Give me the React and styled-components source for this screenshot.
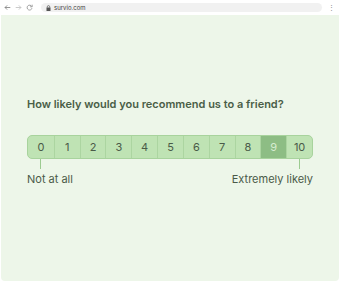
import styled, { createGlobalStyle } from "styled-components";

const Global = createGlobalStyle`
  html, body { margin: 0; padding: 0; background: #ffffff; }
  body { font-family: Inter, "Noto Sans", sans-serif; }
`;

const Window = styled.div`
  width: 340px;
  height: 282px;
  display: flex;
  flex-direction: column;
  background: #ffffff;
`;

const Toolbar = styled.div`
  height: 15px;
  display: flex;
  align-items: center;
  padding: 0 4px 0 4px;
  gap: 4px;
  color: #9a9a9a;
`;

const NavIcon = styled.svg`
  width: 7px;
  height: 7px;
  flex: none;
`;

const Address = styled.div`
  flex: 1;
  height: 9px;
  border-radius: 5px;
  background: #f1f1f1;
  display: flex;
  align-items: center;
  padding-left: 5px;
  gap: 3px;
  font-size: 6px;
  color: #3c3c3c;
  margin-left: 4px;
`;

const Menu = styled.div`
  width: 10px;
  text-align: center;
  font-size: 7px;
  line-height: 7px;
  color: #8a8a8a;
`;

const Page = styled.div`
  flex: 1;
  background: #edf6e9;
  border-radius: 0 0 4px 4px;
  margin: 0 1px 1px 1px;
  padding: 82px 26px 0 26px;
`;

const Question = styled.h2`
  margin: 0;
  font-size: 11px;
  font-weight: 600;
  color: #4a5e47;
  letter-spacing: 0;
`;

const Scale = styled.div`
  margin-top: 24px;
  display: grid;
  grid-template-columns: repeat(11, 1fr);
  height: 22px;
  border: 1px solid #a8d39d;
  border-radius: 5px;
  overflow: hidden;
  background: #bfe3b4;
`;

const Cell = styled.div`
  display: flex;
  align-items: center;
  justify-content: center;
  font-size: 11px;
  color: ${(p) => (p.$active ? "#d6ecd0" : "#4a5a48")};
  background: ${(p) => (p.$active ? "#8dbd84" : "transparent")};
  border-left: ${(p) => (p.$first ? "none" : "1px solid #acd5a1")};
`;

const Ticks = styled.div`
  display: flex;
  justify-content: space-between;
  padding: 0 13px;
  height: 10px;
`;

const Tick = styled.div`
  width: 1px;
  height: 10px;
  background: #9ccb91;
`;

const Labels = styled.div`
  display: flex;
  justify-content: space-between;
  font-size: 11px;
  color: #4a5a48;
  margin-top: 3px;
`;

export default function App() {
  const values = Array.from({ length: 11 }, (_, i) => i);
  return (
    <>
      <Global />
      <Window>
        <Toolbar>
          <NavIcon viewBox="0 0 10 10">
            <path d="M9 5H1.5M4.5 2L1.5 5l3 3" stroke="#777" strokeWidth="1.1" fill="none" />
          </NavIcon>
          <NavIcon viewBox="0 0 10 10">
            <path d="M1 5h7.5M5.5 2l3 3-3 3" stroke="#bbb" strokeWidth="1.1" fill="none" />
          </NavIcon>
          <NavIcon viewBox="0 0 10 10">
            <path d="M8.2 3.5A3.5 3.5 0 1 0 8.5 6" stroke="#888" strokeWidth="1.1" fill="none" />
            <path d="M8.8 1v3h-3" stroke="#888" strokeWidth="1.1" fill="none" />
          </NavIcon>
          <Address>
            <svg width="5" height="6" viewBox="0 0 5 6">
              <rect x="0.5" y="2.5" width="4" height="3.5" fill="#555" />
              <path d="M1.3 2.6V1.8a1.2 1.2 0 0 1 2.4 0v.8" stroke="#555" strokeWidth="0.7" fill="none" />
            </svg>
            survio.com
          </Address>
          <Menu>⋮</Menu>
        </Toolbar>
        <Page>
          <Question>How likely would you recommend us to a friend?</Question>
          <Scale>
            {values.map((v) => (
              <Cell key={v} $first={v === 0} $active={v === 9}>
                {v}
              </Cell>
            ))}
          </Scale>
          <Ticks>
            <Tick />
            <Tick />
          </Ticks>
          <Labels>
            <span>Not at all</span>
            <span>Extremely likely</span>
          </Labels>
        </Page>
      </Window>
    </>
  );
}
